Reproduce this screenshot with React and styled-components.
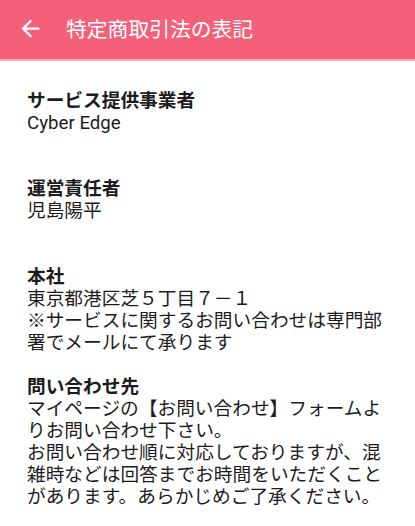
import React from "react";
import styled, { createGlobalStyle } from "styled-components";

const GlobalStyle = createGlobalStyle`
  html, body {
    margin: 0;
    padding: 0;
    background: #ffffff;
  }
  body {
    font-family: Roboto, "Noto Sans CJK JP", "Noto Sans", sans-serif;
    color: #1c1c1c;
  }
`;

const Page = styled.div`
  width: 415px;
  min-height: 526px;
  background: #ffffff;
`;

const AppBar = styled.header`
  height: 59px;
  background: #f4607a;
  display: flex;
  align-items: center;
  padding-left: 17px;
  box-shadow: 0 2px 0 #f9aab6;
  box-sizing: border-box;
  padding-bottom: 3px;
`;

const BackButton = styled.button`
  width: 27px;
  height: 27px;
  padding: 0;
  border: 0;
  background: none;
  display: flex;
  align-items: center;
  justify-content: center;
  cursor: pointer;
  color: #ffffff;
`;

const Title = styled.h1`
  margin: 0 0 0 22px;
  font-size: 20.8px;
  font-weight: 400;
  color: #ffffff;
`;

const Content = styled.main`
  padding: 31px 22px 20px 27px;
  font-size: 18.7px;
  line-height: 22px;
`;

const Section = styled.section`
  margin-top: ${({ $gap }) => $gap}px;
  &:first-child {
    margin-top: 0;
  }
`;

const Label = styled.h2`
  margin: 0;
  font-size: inherit;
  line-height: inherit;
  font-weight: 700;
`;

const Value = styled.p`
  margin: 0;
`;

const sections = [
  { label: "サービス提供事業者", lines: ["Cyber Edge"], gap: 0 },
  { label: "運営責任者", lines: ["児島陽平"], gap: 44 },
  {
    label: "本社",
    lines: [
      "東京都港区芝５丁目７－１",
      "※サービスに関するお問い合わせは専門部署でメールにて承ります",
    ],
    gap: 44,
  },
  {
    label: "問い合わせ先",
    lines: [
      "マイページの【お問い合わせ】フォームよりお問い合わせ下さい。",
      "お問い合わせ順に対応しておりますが、混雑時などは回答までお時間をいただくことがあります。あらかじめご了承ください。",
    ],
    gap: 22,
  },
];

function ArrowBack() {
  return (
    <svg width="27" height="27" viewBox="0 0 24 24" fill="currentColor">
      <path d="M20 11H7.83l5.59-5.59L12 4l-8 8 8 8 1.41-1.41L7.83 13H20v-2z" />
    </svg>
  );
}

export default function App() {
  return (
    <Page>
      <GlobalStyle />
      <AppBar>
        <BackButton aria-label="戻る">
          <ArrowBack />
        </BackButton>
        <Title>特定商取引法の表記</Title>
      </AppBar>
      <Content>
        {sections.map((s) => (
          <Section key={s.label} $gap={s.gap}>
            <Label>{s.label}</Label>
            {s.lines.map((line) => (
              <Value key={line}>{line}</Value>
            ))}
          </Section>
        ))}
      </Content>
    </Page>
  );
}
